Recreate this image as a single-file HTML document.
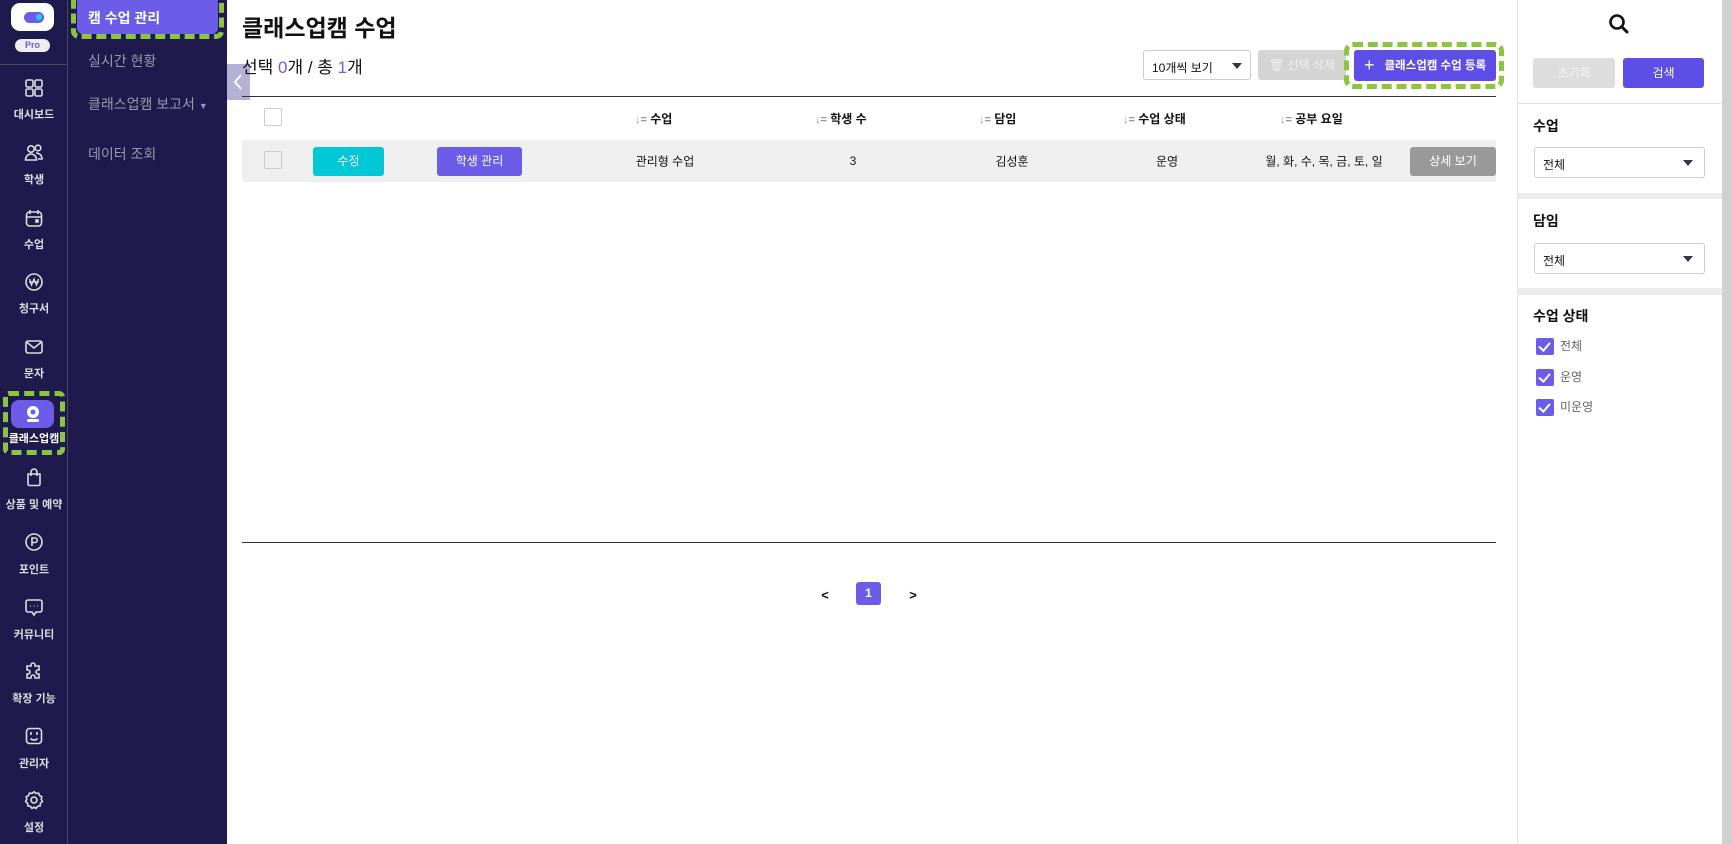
<!DOCTYPE html>
<html><head><meta charset="utf-8">
<style>
*{box-sizing:border-box;margin:0;padding:0}
body{width:1732px;height:844px;position:relative;overflow:hidden;background:#fff;font-family:"Liberation Sans","Noto Sans CJK KR",sans-serif;color:#111}
.a{position:absolute}
.bar{left:0;top:0;width:68px;height:844px;background:#1f1a4d;border-right:1px solid #4a4560}
.side{left:68px;top:0;width:159px;height:844px;background:#1f1a4d}
.ni{position:absolute;left:0;width:68px;text-align:center;color:#ddd;font-size:11px;font-weight:bold}
.ni svg{position:absolute;left:24px;width:20px;height:20px}
.cen{transform:translate(-50%,-50%);white-space:nowrap}
.hd{font-size:12px;font-weight:bold}
.sort{font-size:11px;color:#999}
.btn{position:absolute;border-radius:3px;color:#fff;font-size:12px;text-align:center}
.cb{position:absolute;width:18px;height:17px;background:#6c5ce7;border-radius:2px}
.cb:after{content:"";position:absolute;left:5px;top:2px;width:5px;height:9px;border:solid #fff;border-width:0 2px 2px 0;transform:rotate(40deg)}
.sel{position:absolute;border:1px solid #ccc;border-radius:3px;background:#fff;font-size:12px}
.tri{position:absolute;width:0;height:0;border-left:5px solid transparent;border-right:5px solid transparent;border-top:6px solid #334}
</style></head><body>
<div class="a bar"></div>
<div class="a side"></div>
<!-- logo -->
<div class="a" style="left:11px;top:3px;width:43px;height:28px;background:#fff;border-radius:9px"></div>
<div class="a" style="left:24px;top:12px;width:20px;height:11px;background:#6c5ce7;border-radius:6px"></div>
<div class="a" style="left:36px;top:14px;width:6px;height:6px;background:#19d3e6;border-radius:50%"></div>
<div class="a" style="left:15px;top:39px;width:35px;height:13px;background:#eee;border-radius:7px;color:#6c5ce7;font-size:9px;font-weight:bold;text-align:center;line-height:13px">Pro</div>
<div class="a" style="left:0;top:64px;width:68px;height:1px;background:#4a4560"></div>

<div class="ni" style="top:78px"><svg style="top:0" viewBox="0 0 20 20" fill="none" stroke="#ddd" stroke-width="1.6"><rect x="2" y="2" width="7" height="7" rx="1.5"/><rect x="11" y="2" width="7" height="7" rx="1.5"/><rect x="2" y="11" width="7" height="7" rx="1.5"/><rect x="11" y="11" width="7" height="7" rx="1.5"/></svg><div style="position:absolute;top:28px;width:68px">대시보드</div></div>
<div class="ni" style="top:143px"><svg style="top:0" viewBox="0 0 20 20" fill="none" stroke="#ddd" stroke-width="1.6"><circle cx="7" cy="6" r="3.2"/><circle cx="14" cy="5" r="2.8"/><path d="M1.5 17c0-4 3-6 5.5-6s5.5 2 5.5 6zM12 10c3 0 6 2 6 6h-4"/></svg><div style="position:absolute;top:28px;width:68px">학생</div></div>
<div class="ni" style="top:208px"><svg style="top:0" viewBox="0 0 20 20" fill="none" stroke="#ddd" stroke-width="1.6"><rect x="2.5" y="4" width="15" height="14" rx="3"/><path d="M6 2v4M14 2v4M2.5 9h15"/><rect x="12" y="12" width="2" height="2" fill="#ddd"/></svg><div style="position:absolute;top:28px;width:68px">수업</div></div>
<div class="ni" style="top:272px"><svg style="top:0" viewBox="0 0 20 20" fill="none" stroke="#ddd" stroke-width="1.6"><circle cx="10" cy="10" r="8"/><path d="M5.5 7l2 6 2.5-6 2.5 6 2-6M5 10h10" stroke-width="1.3"/></svg><div style="position:absolute;top:28px;width:68px">청구서</div></div>
<div class="ni" style="top:337px"><svg style="top:0" viewBox="0 0 20 20" fill="none" stroke="#ddd" stroke-width="1.6"><rect x="2" y="4" width="16" height="12" rx="2"/><path d="M2.5 5l7.5 6 7.5-6"/></svg><div style="position:absolute;top:28px;width:68px">문자</div></div>
<!-- active classupcam -->
<div class="a" style="left:3px;top:391px;width:62px;height:64px;border:5px dashed #8cc63f;border-radius:6px"></div>
<div class="a" style="left:11px;top:400px;width:43px;height:28px;background:#6c5ce7;border-radius:8px"></div>
<svg class="a" style="left:23px;top:404px" width="20" height="20" viewBox="0 0 20 20"><circle cx="10" cy="8" r="6" fill="#fff"/><circle cx="10" cy="8" r="2.5" fill="#6c5ce7"/><rect x="4" y="15" width="12" height="3" rx="1.5" fill="#fff"/></svg>
<div class="ni" style="top:430px;color:#fff">클래스업캠</div>
<div class="ni" style="top:467px"><svg style="top:0" viewBox="0 0 20 20" fill="none" stroke="#ddd" stroke-width="1.6"><path d="M4 7h12v10a1.5 1.5 0 0 1-1.5 1.5h-9A1.5 1.5 0 0 1 4 17z"/><path d="M7 9V5a3 3 0 0 1 6 0v4"/></svg><div style="position:absolute;top:29px;width:68px">상품 및 예약</div></div>
<div class="ni" style="top:532px"><svg style="top:0" viewBox="0 0 20 20" fill="none" stroke="#ddd" stroke-width="1.6"><circle cx="10" cy="10" r="8"/><path d="M8 14V6h3a2.2 2.2 0 0 1 0 4.5H8"/></svg><div style="position:absolute;top:29px;width:68px">포인트</div></div>
<div class="ni" style="top:597px"><svg style="top:0" viewBox="0 0 20 20" fill="none" stroke="#ddd" stroke-width="1.6"><path d="M4 3h12a2 2 0 0 1 2 2v8a2 2 0 0 1-2 2h-4l-2 3-2-3H4a2 2 0 0 1-2-2V5a2 2 0 0 1 2-2z"/><path d="M6.5 9h.5M9.8 9h.5M13 9h.5" stroke-width="2"/></svg><div style="position:absolute;top:29px;width:68px">커뮤니티</div></div>
<div class="ni" style="top:661px"><svg style="top:0" viewBox="0 0 20 20" fill="none" stroke="#ddd" stroke-width="1.6"><path d="M7 4a2 2 0 0 1 4 0v1h4v4h-1a2 2 0 0 0 0 4h1v4h-4v-1a2 2 0 0 0-4 0v1H3v-4h1a2 2 0 0 0 0-4H3V5h4z"/></svg><div style="position:absolute;top:29px;width:68px">확장 기능</div></div>
<div class="ni" style="top:726px"><svg style="top:0" viewBox="0 0 20 20" fill="none" stroke="#ddd" stroke-width="1.6"><rect x="2.5" y="2.5" width="15" height="15" rx="3"/><path d="M7 6v3M13 6v3M6.5 12.5c2 2 5 2 7 0"/></svg><div style="position:absolute;top:29px;width:68px">관리자</div></div>
<div class="ni" style="top:790px"><svg style="top:0" viewBox="0 0 20 20" fill="none" stroke="#ddd" stroke-width="1.6"><path d="M10 1.8l2 1.6 2.6-.3.9 2.4 2.3 1.3-.6 2.5 1.2 2.3-2 1.7-.2 2.6-2.6.5-1.6 2-2-1.2-2 1.2-1.6-2-2.6-.5-.2-2.6-2-1.7 1.2-2.3-.6-2.5 2.3-1.3.9-2.4 2.6.3z"/><circle cx="10" cy="10" r="3"/></svg><div style="position:absolute;top:29px;width:68px">설정</div></div>

<!-- second sidebar -->
<div class="a" style="left:71px;top:-6px;width:153px;height:45px;border:5px dashed #8cc63f;border-radius:8px"></div>
<div class="a" style="left:77px;top:0;width:141px;height:34px;background:#6c5ce7;border-radius:0 0 6px 6px"></div>
<div class="a" style="left:88px;top:8px;color:#fff;font-size:14px;font-weight:bold">캠 수업 관리</div>
<div class="a" style="left:88px;top:51px;color:#9a98a8;font-size:14px">실시간 현황</div>
<div class="a" style="left:88px;top:94px;color:#9a98a8;font-size:14px">클래스업캠 보고서 <span style="font-size:9px">▼</span></div>
<div class="a" style="left:88px;top:144px;color:#9a98a8;font-size:14px">데이터 조회</div>
<div class="a" style="left:227px;top:64px;width:23px;height:36px;background:#b5b1d6"></div>
<svg class="a" style="left:232px;top:73px" width="12" height="18" viewBox="0 0 12 18"><path d="M9 2L3 9l6 7" fill="none" stroke="#fff" stroke-width="1.8"/></svg>

<!-- main -->
<div class="a" style="left:242px;top:9px;font-size:23px;font-weight:bold">클래스업캠 수업</div>
<div class="a" style="left:242px;top:53px;font-size:17px">선택 <span style="color:#6c5ce7">0</span>개 / 총 <span style="color:#6c5ce7">1</span>개</div>
<div class="sel" style="left:1143px;top:50px;width:108px;height:30px;padding:8px 0 0 8px">10개씩 보기</div>
<div class="tri" style="left:1232px;top:63px"></div>
<div class="btn" style="left:1258px;top:50px;width:88px;height:30px;background:#d4d4d4;color:#eee;line-height:30px">🗑 선택 삭제</div>
<div class="a" style="left:1344px;top:42px;width:160px;height:47px;border:5px dashed #8cc63f;border-radius:9px"></div>
<div class="btn" style="left:1354px;top:50px;width:142px;height:31px;background:#5e4ee8;line-height:31px;font-weight:bold;font-size:11.5px"><span style="font-size:18px;font-weight:normal;vertical-align:-2px;margin-right:10px">+</span>클래스업캠 수업 등록</div>
<div class="a" style="left:242px;top:96px;width:1254px;height:1px;background:#333"></div>

<div class="a" style="left:264px;top:108px;width:18px;height:18px;border:1px solid #ccc;border-radius:2px;background:#fff"></div>
<div class="a hd" style="left:635px;top:110px"><span class="sort">↓=</span> 수업</div>
<div class="a hd" style="left:815px;top:110px"><span class="sort">↓=</span> 학생 수</div>
<div class="a hd" style="left:979px;top:110px"><span class="sort">↓=</span> 담임</div>
<div class="a hd" style="left:1123px;top:110px"><span class="sort">↓=</span> 수업 상태</div>
<div class="a hd" style="left:1280px;top:110px"><span class="sort">↓=</span> 공부 요일</div>

<div class="a" style="left:242px;top:140px;width:1254px;height:42px;background:#efefef"></div>
<div class="a" style="left:264px;top:151px;width:18px;height:18px;border:1px solid #ccc;border-radius:2px"></div>
<div class="btn" style="left:313px;top:147px;width:71px;height:29px;background:#00c8d7;line-height:29px">수정</div>
<div class="btn" style="left:437px;top:147px;width:85px;height:29px;background:#6c5ce7;line-height:29px">학생 관리</div>
<div class="a cen" style="left:665px;top:161px;font-size:12px">관리형 수업</div>
<div class="a cen" style="left:853px;top:161px;font-size:12px">3</div>
<div class="a cen" style="left:1012px;top:161px;font-size:12px">김성훈</div>
<div class="a cen" style="left:1167px;top:161px;font-size:12px">운영</div>
<div class="a cen" style="left:1324px;top:161px;font-size:12px">월, 화, 수, 목, 금, 토, 일</div>
<div class="btn" style="left:1410px;top:147px;width:86px;height:29px;background:#999;line-height:29px">상세 보기</div>

<div class="a" style="left:242px;top:542px;width:1254px;height:1px;background:#333"></div>
<div class="a cen" style="left:825px;top:595px;font-size:13px;font-weight:bold">&lt;</div>
<div class="btn" style="left:856px;top:582px;width:25px;height:23px;background:#6c5ce7;line-height:23px;font-weight:bold">1</div>
<div class="a cen" style="left:913px;top:595px;font-size:13px;font-weight:bold">&gt;</div>

<!-- right panel -->
<div class="a" style="left:1517px;top:0;width:1px;height:844px;background:#e2e2e2"></div>
<div class="a" style="left:1722px;top:0;width:10px;height:844px;background:#d0d0d0"></div>
<svg class="a" style="left:1608px;top:13px" width="22" height="22" viewBox="0 0 22 22"><circle cx="9" cy="9" r="6.5" fill="none" stroke="#111" stroke-width="2.6"/><path d="M14 14l5 5" stroke="#111" stroke-width="3" stroke-linecap="round"/></svg>
<div class="btn" style="left:1533px;top:58px;width:82px;height:30px;background:#ddd;line-height:30px;color:#f4f4f4">초기화</div>
<div class="btn" style="left:1623px;top:58px;width:81px;height:30px;background:#5e4ee8;line-height:30px">검색</div>
<div class="a" style="left:1518px;top:103px;width:204px;height:1px;background:#e2e2e2"></div>
<div class="a" style="left:1533px;top:116px;font-size:14px;font-weight:bold">수업</div>
<div class="sel" style="left:1534px;top:147px;width:171px;height:31px;padding:8px 0 0 8px">전체</div>
<div class="tri" style="left:1683px;top:160px"></div>
<div class="a" style="left:1518px;top:193px;width:204px;height:6px;background:#ececec"></div>
<div class="a" style="left:1533px;top:211px;font-size:14px;font-weight:bold">담임</div>
<div class="sel" style="left:1534px;top:243px;width:171px;height:31px;padding:8px 0 0 8px">전체</div>
<div class="tri" style="left:1683px;top:256px"></div>
<div class="a" style="left:1518px;top:288px;width:204px;height:7px;background:#ececec"></div>
<div class="a" style="left:1533px;top:306px;font-size:14px;font-weight:bold">수업 상태</div>
<div class="cb" style="left:1536px;top:338px"></div><div class="a" style="left:1560px;top:337px;font-size:12px;color:#666">전체</div>
<div class="cb" style="left:1536px;top:369px"></div><div class="a" style="left:1560px;top:368px;font-size:12px;color:#666">운영</div>
<div class="cb" style="left:1536px;top:399px"></div><div class="a" style="left:1560px;top:398px;font-size:12px;color:#666">미운영</div>
</body></html>
